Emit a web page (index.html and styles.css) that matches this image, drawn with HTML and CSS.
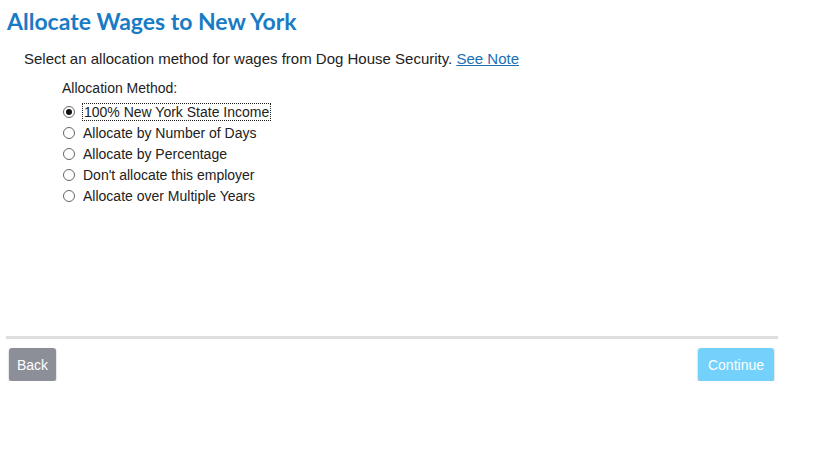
FILE: index.html
```html
<!DOCTYPE html>
<html lang="en">
<head>
  <meta charset="UTF-8" />
  <title>Allocate Wages to New York</title>
  <link rel="stylesheet" href="styles.css">
</head>
<body>
  <div class="page">
    <h1>Allocate Wages to New York</h1>
    <p class="intro">Select an allocation method for wages from Dog House Security. <a href="#">See Note</a></p>

    <fieldset class="method">
      <legend>Allocation Method:</legend>
      <label><input type="radio" name="method" checked> <span class="focused">100% New York State Income</span></label>
      <label><input type="radio" name="method"> <span>Allocate by Number of Days</span></label>
      <label><input type="radio" name="method"> <span>Allocate by Percentage</span></label>
      <label><input type="radio" name="method"> <span>Don't allocate this employer</span></label>
      <label><input type="radio" name="method"> <span>Allocate over Multiple Years</span></label>
    </fieldset>

    <div class="footer">
      <button type="button" class="btn back">Back</button>
      <button type="button" class="btn continue">Continue</button>
    </div>
  </div>
</body>
</html>
```

FILE: styles.css
```css
* {
  box-sizing: border-box;
  margin: 0;
  padding: 0;
}

body {
  font-family: 'Liberation Sans', Arial, sans-serif;
  color: #222;
  background: #fff;
}

.page {
  width: 778px;
  padding: 8px 0 0 6px;
}

h1 {
  font-family: Lato, 'Open Sans', sans-serif;
  font-weight: 700;
  font-size: 23px;
  line-height: 26px;
  color: #1a7bc5;
  padding-left: 1px;
}

.intro {
  font-size: 15px;
  line-height: 18px;
  margin: 16px 0 0 18px;
}

.intro a {
  color: #1a6fb5;
}

.method {
  border: none;
  margin: 12px 0 0 56px;
}

.method legend {
  font-size: 14px;
  line-height: 17px;
  margin-bottom: 4px;
}

.method label {
  display: flex;
  align-items: center;
  gap: 8px;
  font-size: 14px;
  height: 21px;
}

.method input[type="radio"] {
  appearance: none;
  width: 12px;
  height: 12px;
  margin: 0 0 0 1px;
  border: 1px solid #666;
  border-radius: 50%;
  background: #fff;
  display: grid;
  place-items: center;
}

.method input[type="radio"]:checked::before {
  content: "";
  width: 6px;
  height: 6px;
  border-radius: 50%;
  background: #111;
}

.method .focused {
  outline: 1px dotted #222;
  padding: 0 1px;
}

.footer {
  margin-top: 130px;
  border-top: 3px solid #dedede;
  display: flex;
  justify-content: space-between;
  padding: 9px 4px 0 3px;
}

.btn {
  font-family: 'Liberation Sans', Arial, sans-serif;
  font-size: 14px;
  color: #fff;
  border: none;
  border-radius: 3px;
  height: 33px;
  padding: 0 8px;
  box-shadow: 0 1px 2px rgba(0, 0, 0, 0.35);
}

.back {
  background: #8d8f98;
}

.continue {
  background: #74d1fb;
  padding: 0 10px;
}
```
